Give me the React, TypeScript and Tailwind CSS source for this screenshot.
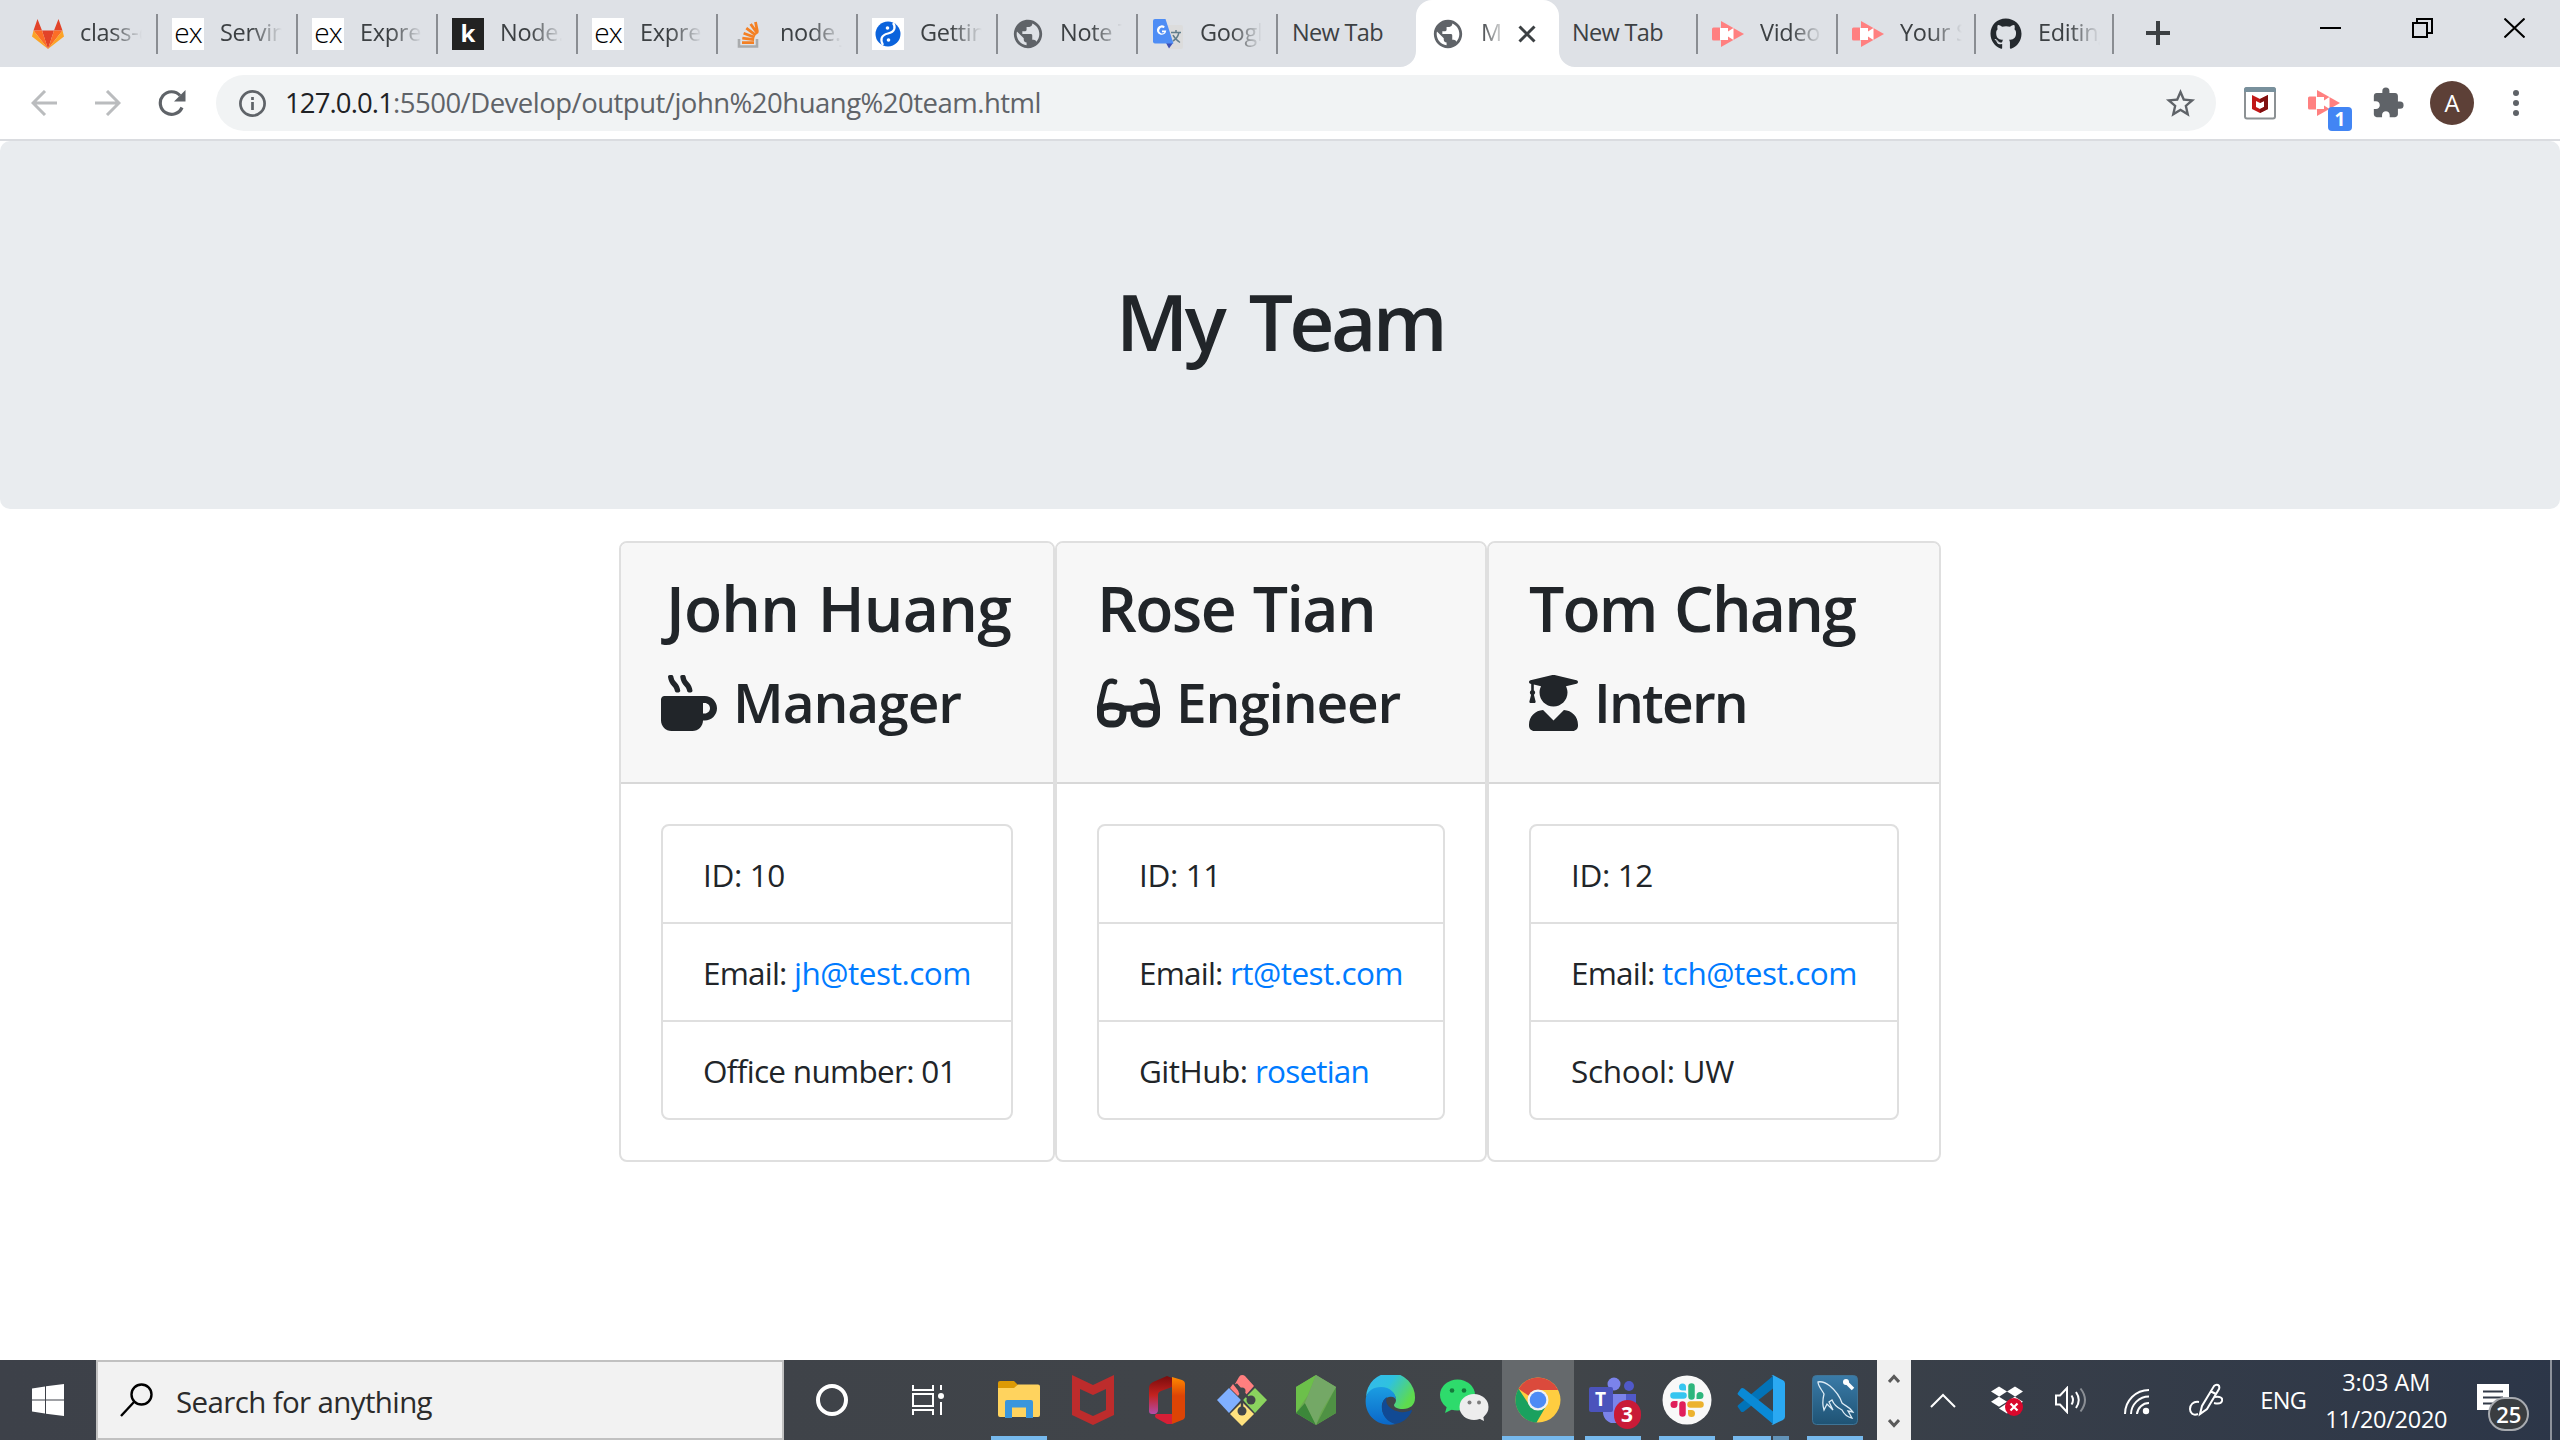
import { useLayoutEffect, useRef, useState, type ReactNode } from "react";
import { FaGithub, FaGlasses, FaMugHot, FaUserGraduate, FaDropbox } from "react-icons/fa";
import { MdExtension, MdPublic, MdStarBorder } from "react-icons/md";

/** One run of text whose tracking is computed so that it is exactly `w` pixels wide. */
function Fit({ w, children, className = "" }: { w: number; children: string; className?: string }) {
  const ref = useRef<HTMLSpanElement>(null);
  const [ls, setLs] = useState(0);
  useLayoutEffect(() => {
    const el = ref.current;
    if (!el) return;
    el.style.letterSpacing = "0px";
    const natural = el.getBoundingClientRect().width;
    const value = (w - natural) / children.length;
    el.style.letterSpacing = value + "px";
    setLs(value);
  }, [w, children]);
  return (
    <span ref={ref} className={"inline-block whitespace-pre " + className} style={{ letterSpacing: ls }}>
      {children}
    </span>
  );
}

/* ---------- favicons ---------- */

const GitLab = () => (
  <svg width="32" height="30" viewBox="0 0 32 30">
    <path d="M5.5 0 10 11.5H1.5zM26.500 0 22 11.500h8.500z" fill="#e24329" />
    <path d="M10 11.500h12L16 30z" fill="#e24329" />
    <path d="M1.500 11.500H10L16 30zM30.500 11.500H22L16 30z" fill="#fc6d26" />
    <path d="M1.500 11.500 0 17.500 16 30zM30.500 11.500 32 17.500 16 30z" fill="#fca326" />
  </svg>
);

const Ex = () => (
  <span className="flex h-8 w-8 items-center justify-center bg-white pb-[3px] font-['Open_Sans'] text-[28px] leading-none font-light tracking-[-1px] text-black">
    ex
  </span>
);

const KBox = () => (
  <span className="flex h-8 w-8 items-center justify-center bg-[#222] pb-[2px] font-['Open_Sans'] text-[24px] leading-none font-bold text-white">
    k
  </span>
);

const StackOverflow = () => (
  <svg width="32" height="32" viewBox="0 0 32 32">
    <path d="M7 21v7.500h18V21" fill="none" stroke="#a9abad" strokeWidth="2.600" />
    <path
      d="M10 24.600h12M10.300 20.200l11.800 1.500M11.600 15.200l11 4M14.300 10.200l9.400 7M18.600 6l7 9.600M23.500 4l2 10"
      stroke="#f48024"
      strokeWidth="2.800"
      fill="none"
    />
  </svg>
);

const Swirl = () => (
  <svg width="32" height="32" viewBox="0 0 32 32">
    <rect width="32" height="32" fill="#fff" />
    <circle cx="16" cy="16" r="12.500" fill="#0b63dc" />
    <path d="M21 5c3 4 2 9-5 10.500S8 22 11 27" fill="none" stroke="#fff" strokeWidth="2.200" />
    <circle cx="15.500" cy="10" r="1.800" fill="#fff" />
    <circle cx="16.500" cy="22" r="1.800" fill="#fff" />
  </svg>
);

const Globe = () => <MdPublic className="-m-px h-[34px] w-[34px] shrink-0 text-[#5f6368]" />;

const Translate = () => (
  <svg width="32" height="32" viewBox="0 0 32 32">
    <path d="M12 7h17a2 2 0 0 1 2 2v20a2 2 0 0 1-2 2H18z" fill="#dcdcdc" />
    <path d="M14 25h7l-4 5.500z" fill="#3f51b5" />
    <path d="M3 1h10.500l8 24.500H3a2 2 0 0 1-2-2V3a2 2 0 0 1 2-2z" fill="#4e8df5" />
    <path d="M14.300 12.500H10v1.800h2.500A2.900 2.900 0 1 1 11.600 10l1.300-1.300a4.700 4.700 0 1 0 1.400 3.800z" fill="#fff" />
    <path d="M19 14.500h10M24 12v2.500M27 14.500c-1 4-3.500 7-6 8.500M21 17c1.500 3.500 4 5.500 7 7.500" stroke="#607d8b" strokeWidth="1.500" fill="none" />
  </svg>
);

const Cast = () => (
  <svg width="32" height="26" viewBox="0 0 32 26">
    <path d="M9 0 32 13 9 26z" fill="#ff8080" />
    <rect x="0" y="6.500" width="9" height="13" rx="1.500" fill="#ff8080" />
    <path d="M8 7h8v3.500L21.500 7v12L16 15.500V19H8z" fill="#fff" />
  </svg>
);

/* ---------- tab strip ---------- */

type TabInfo = { label: string; icon?: ReactNode; width?: string; last?: boolean };

const leftTabs: TabInfo[] = [
  { label: "class-co", icon: <GitLab /> },
  { label: "Serving", icon: <Ex /> },
  { label: "Express", icon: <Ex /> },
  { label: "Node.js", icon: <KBox /> },
  { label: "Express", icon: <Ex /> },
  { label: "node.js", icon: <StackOverflow /> },
  { label: "Getting", icon: <Swirl /> },
  { label: "Note Ta", icon: <Globe /> },
  { label: "Google", icon: <Translate /> },
  { label: "New Tab", last: true },
];

const rightTabs: TabInfo[] = [
  { label: "New Tab" },
  { label: "Video |", icon: <Cast /> },
  { label: "Your Sc", icon: <Cast />, width: "w-[138px]" },
  { label: "Editing", icon: <FaGithub className="h-8 w-8 text-[#24292e]" />, width: "w-[138px]" },
];

function Tab({ label, icon, width = "w-[140px]", last }: TabInfo) {
  return (
    <div className={"flex h-[67px] shrink-0 items-center pl-[14px] " + width}>
      {icon ? (
        <>
          <span className="mr-4 flex h-8 w-8 shrink-0 items-center">{icon}</span>
          <span className="w-[62px] overflow-hidden pb-[1px] text-[23.500px] tracking-[-0.300px] whitespace-nowrap [mask-image:linear-gradient(to_right,#000_50%,transparent)]">
            {label}
          </span>
        </>
      ) : (
        <span className="w-[110px] pb-[1px] text-[23.500px]">
          <Fit w={91}>{label}</Fit>
        </span>
      )}
      {!last && <span className="ml-auto h-10 w-[2px] shrink-0 bg-[#8a8d92]" />}
    </div>
  );
}

function TabStrip() {
  return (
    <div className="flex h-[67px] bg-[#dee1e6] pl-[18px] text-[#3c4043]">
      {leftTabs.map((t, i) => (
        <Tab key={i} {...t} />
      ))}
      <div className="relative -mr-[1px] -ml-[2px] flex h-[67px] w-[143px] shrink-0 items-center rounded-t-2xl bg-white pl-4">
        <svg className="absolute bottom-0 -left-4" width="16" height="16">
          <path d="M16 0v16H0A16 16 0 0 0 16 0z" fill="#fff" />
        </svg>
        <svg className="absolute -right-4 bottom-0" width="16" height="16">
          <path d="M0 0v16h16A16 16 0 0 1 0 0z" fill="#fff" />
        </svg>
        <Globe />
        <span className="ml-[17px] w-[21px] overflow-hidden pb-[1px] text-[23.500px] whitespace-nowrap [mask-image:linear-gradient(to_right,#000,transparent_120%)]">
          My Team
        </span>
        <svg className="ml-4" width="18" height="18" viewBox="0 0 18 18">
          <path d="M1.500 1.500l15 15M16.500 1.500l-15 15" stroke="#3c4043" strokeWidth="3" />
        </svg>
      </div>
      {rightTabs.map((t, i) => (
        <Tab key={i} {...t} />
      ))}
      <svg className="mt-[21px] ml-8" width="24" height="24" viewBox="0 0 24 24">
        <path d="M12 0v24M0 12h24" stroke="#3c4043" strokeWidth="4" />
      </svg>
      <div className="mt-[18px] ml-auto flex h-5 gap-[71px] pr-[35px]">
        <svg width="21" height="20">
          <path d="M0 10h21" stroke="#000" strokeWidth="2" />
        </svg>
        <svg width="21" height="20" fill="none" stroke="#000" strokeWidth="2">
          <path d="M1 5h14v14H1zM5 5V1h15v14h-5" />
        </svg>
        <svg width="21" height="20" stroke="#000" strokeWidth="2">
          <path d="M.5.5l20 19M20.500.5l-20 19" />
        </svg>
      </div>
    </div>
  );
}

function Toolbar() {
  return (
    <div className="flex h-[74px] items-center border-b-2 border-[#dadce0] bg-white pl-[31px]">
      <svg width="26" height="26" viewBox="0 0 26 26" fill="none" stroke="#babcbe" strokeWidth="3">
        <path d="M26 13H2M14 1 2 13l12 12" />
      </svg>
      <svg className="ml-[38px]" width="26" height="26" viewBox="0 0 26 26" fill="none" stroke="#babcbe" strokeWidth="3">
        <path d="M0 13h24M12 1l12 12-12 12" />
      </svg>
      <svg className="ml-[37px]" width="28" height="28" viewBox="0 0 28 28">
        <path d="M24 18.500A11.300 11.300 0 1 1 22 6.500" fill="none" stroke="#5f6368" strokeWidth="3.200" />
        <path d="M27.500 1v11.500H16z" fill="#5f6368" />
      </svg>
      <div className="ml-[30px] flex h-14 w-[2000px] items-center rounded-full bg-[#f1f3f4] pl-[23px]">
        <svg width="27" height="27" viewBox="0 0 27 27">
          <circle cx="13.500" cy="13.500" r="12.100" fill="none" stroke="#5f6368" strokeWidth="2.700" />
          <path d="M13.500 12v8M13.500 7v3" stroke="#5f6368" strokeWidth="2.700" />
        </svg>
        <span className="ml-[19px] text-[27.500px] leading-10 text-[#5f6368]">
          <Fit w={108} className="text-[#202124]">127.0.0.1</Fit>
          <Fit w={648}>:5500/Develop/output/john%20huang%20team.html</Fit>
        </span>
        <MdStarBorder className="mr-[18px] ml-auto h-[35px] w-[35px] text-[#5f6368]" />
      </div>
      <svg className="ml-7" width="32" height="33" viewBox="0 0 32 33">
        <rect x="1" y="1" width="30" height="30.500" rx="2" fill="#fff" stroke="#8c9194" strokeWidth="2" />
        <path d="M0 3a3 3 0 0 1 3-3h26a3 3 0 0 1 3 3v2H0z" fill="#78909c" />
        <path d="M8 8l8 4 8-4v14l-8 4-8-4zM12 14v6l4 2 4-2v-6l-4 2z" fill="#c01818" fillRule="evenodd" />
        <path d="M24 8v14l-8 4v-4l4-2v-6l-4 2v-4z" fill="#7f1010" />
      </svg>
      <div className="relative ml-8">
        <Cast />
        <span className="absolute top-[17px] left-5 flex h-6 w-6 items-center justify-center rounded bg-[#4285f4] font-['Open_Sans'] text-[19px] leading-none font-bold text-white">
          1
        </span>
      </div>
      <MdExtension className="ml-[31px] h-[34px] w-[34px] text-[#5f6368]" />
      <span className="ml-[25px] flex h-11 w-11 items-center justify-center rounded-full bg-[#5d4037] text-[24px] text-white">A</span>
      <svg className="ml-[39px]" width="6" height="26" fill="#5f6368">
        <circle cx="3" cy="3" r="3" />
        <circle cx="3" cy="13" r="3" />
        <circle cx="3" cy="23" r="3" />
      </svg>
    </div>
  );
}

/* ---------- team page ---------- */

type Row = { label: string; w: number; link?: string; lw?: number };
type Member = {
  name: string;
  nw: number;
  shift?: string;
  role: string;
  rw: number;
  icon: ReactNode;
  width: string;
  rows: Row[];
};

const team: Member[] = [
  {
    name: "John Huang",
    nw: 345,
    shift: "ml-[5px]",
    role: "Manager",
    rw: 228,
    icon: <FaMugHot className="h-14 w-14" />,
    width: "w-[436px]",
    rows: [
      { label: "ID: 10", w: 82 },
      { label: "Email: ", w: 91, link: "jh@test.com", lw: 177 },
      { label: "Office number: 01", w: 253 },
    ],
  },
  {
    name: "Rose Tian",
    nw: 278,
    role: "Engineer",
    rw: 224,
    icon: <FaGlasses className="h-14 w-[63px]" />,
    width: "w-[432px]",
    rows: [
      { label: "ID: 11", w: 82 },
      { label: "Email: ", w: 91, link: "rt@test.com", lw: 173 },
      { label: "GitHub: ", w: 116, link: "rosetian", lw: 114 },
    ],
  },
  {
    name: "Tom Chang",
    nw: 326,
    role: "Intern",
    rw: 153,
    icon: <FaUserGraduate className="h-14 w-[49px]" />,
    width: "w-[454px]",
    rows: [
      { label: "ID: 12", w: 82 },
      { label: "Email: ", w: 91, link: "tch@test.com", lw: 195 },
      { label: "School: UW", w: 163 },
    ],
  },
];

function Card({ m }: { m: Member }) {
  return (
    <div className={"h-[621px] overflow-hidden rounded-lg border-2 border-[#dfdfdf] bg-white " + m.width}>
      <div className="flex h-[241px] flex-col border-b-2 border-[#d8d8d8] bg-[#f7f7f7] px-10 pt-[26px] font-semibold">
        <h2 className="flex h-[77px] items-center text-[62.500px] [word-spacing:3px]">
          <span className={m.shift}>
            <Fit w={m.nw}>{m.name}</Fit>
          </span>
        </h2>
        <h3 className="mt-[23px] flex h-[67px] items-center text-[55px]">
          {m.icon}
          <span className="ml-4">
            <Fit w={m.rw}>{m.role}</Fit>
          </span>
        </h3>
      </div>
      <ul className="m-10 mb-0 h-[296px] divide-y-2 divide-[#dfdfdf] rounded-lg border-2 border-[#dfdfdf] text-[31.500px]">
        {m.rows.map((r) => (
          <li key={r.label} className="flex h-[98px] items-center pt-[2px] pl-10 last:h-[96px]">
            <Fit w={r.w}>{r.label}</Fit>
            {r.link && (
              <a className="text-[#007bff]">
                <Fit w={r.lw ?? 0}>{r.link}</Fit>
              </a>
            )}
          </li>
        ))}
      </ul>
    </div>
  );
}

/* ---------- taskbar icons ---------- */

const Explorer = () => (
  <svg width="42" height="38" viewBox="0 0 42 38">
    <path d="M0 2a2 2 0 0 1 2-2h14l4 4-4 4H0z" fill="#dd9a04" />
    <path d="M0 7h16l4-3.500h20a2 2 0 0 1 2 2V34a2 2 0 0 1-2 2H2a2 2 0 0 1-2-2z" fill="#ffd35e" />
    <path d="M7 21a2 2 0 0 1 2-2h24a2 2 0 0 1 2 2v16h-7V26.500H14V37H7z" fill="#3a96dd" />
  </svg>
);

const McAfee = () => (
  <svg width="42" height="50" viewBox="0 0 42 50">
    <path d="M0 0l21 10L42 0v40L21 50 0 40zM8 14v21l13 6 13-6V14l-13 6z" fill="#bd2c2c" fillRule="evenodd" />
  </svg>
);

const Office = () => (
  <svg width="36" height="48" viewBox="0 0 36 48">
    <defs>
      <linearGradient id="offL" x1="0" y1="0" x2="0" y2="1">
        <stop offset="0" stopColor="#790c0c" />
        <stop offset=".5" stopColor="#c3221f" />
        <stop offset="1" stopColor="#b44ca8" />
      </linearGradient>
      <linearGradient id="offR" x1="0" y1="0" x2="0" y2="1">
        <stop offset="0" stopColor="#ff8a00" />
        <stop offset=".4" stopColor="#dd4405" />
      </linearGradient>
    </defs>
    <path d="M0 12Q0 8 4 6L18 0l5 2v9l-11 4q-3 1-3 4v15q0 3-3 4H3q-3 0-3-3z" fill="url(#offL)" />
    <path d="M7 38h16v10h-5L7 42q-2-2 0-4z" fill="#d61f36" />
    <path d="M23 1l10 3q3 1 3 4v32q0 3-3 4l-10 4z" fill="url(#offR)" />
  </svg>
);

const Git = () => (
  <svg width="50" height="52" viewBox="0 0 50 52">
    <g>
      <path d="M25 1q2 0 3 1l9 10-8 9q-5-4-9-10l-2-1 4-7q1-2 3-2zM16 10l7 9-2 3-8-8z" fill="#ff7f7f" />
      <path d="M12 14l12 12-12 13L0 26z" fill="#80b0ff" />
      <path d="M38 14l12 12-12 13-12-13z" fill="#8ad35e" />
      <path d="M25 28l12 12-12 12-12-12z" fill="#ffe27f" />
      <path d="M19 10l6 7v22M25 17l8 9" stroke="#414549" strokeWidth="2.500" fill="none" />
      <circle cx="25" cy="17" r="3.500" fill="#414549" />
      <circle cx="34" cy="26" r="4.500" fill="#414549" />
      <circle cx="25" cy="37" r="4.500" fill="#414549" />
    </g>
  </svg>
);

const NodeHex = () => (
  <svg width="42" height="50" viewBox="0 0 42 50">
    <path d="M21 0l20 12v26L21 50 1 38V12z" fill="#6aa84f" />
    <path d="M1 12L21 0l-8 20zM1 12l12 8L1 38z" fill="#6cc04a" />
    <path d="M1 38l9-10 11 22z" fill="#3c873a" />
    <path d="M41 12L21 50l20-12z" fill="#4f9144" />
    <path d="M21 0l20 12-15 25-5 13-11-22z" fill="#74a866" />
  </svg>
);

const Edge = () => (
  <svg width="50" height="50" viewBox="0 0 50 50">
    <defs>
      <linearGradient id="edgeT" x1="0" y1="0" x2="1" y2=".5">
        <stop offset="0" stopColor="#35b8ef" />
        <stop offset=".5" stopColor="#2fc2df" />
        <stop offset="1" stopColor="#5edb4e" />
      </linearGradient>
      <linearGradient id="edgeB" x1="0" y1="0" x2="0" y2="1">
        <stop offset="0" stopColor="#1b9de2" />
        <stop offset="1" stopColor="#0b67c8" />
      </linearGradient>
    </defs>
    <path d="M1 22A24.500 24.500 0 0 1 50 23c0 7-5 11-12 11-6 0-9-2-9-4 0-1 2-2 2-5 0-7-7-12-15-12S3 17 1 22z" fill="url(#edgeT)" />
    <path d="M1 22c2-6 7-10 15-10 9 0 15 6 15 13-1-3-4-4-7-3-5 1-8 6-7 12 1 8 8 13 14 15C14 53-2 41 1 22z" fill="url(#edgeB)" />
    <path d="M17 33c0-6 2-9 5-11-2 4 0 9 5 12 6 4 14 4 19 1 1 0 1 1 1 1-4 8-10 12-17 13-7-2-13-8-13-16z" fill="#114a94" />
  </svg>
);

const WeChat = () => (
  <svg width="49" height="42" viewBox="0 0 49 42">
    <ellipse cx="17.500" cy="16" rx="17.500" ry="15.500" fill="#2edb6c" />
    <path d="M7 27l-2 7 8-4z" fill="#2edb6c" />
    <ellipse cx="34" cy="28" rx="14.500" ry="13" fill="#ededed" />
    <path d="M38 39l6 3-1-6z" fill="#ededed" />
    <circle cx="12" cy="11.500" r="2.300" fill="#157a3b" />
    <circle cx="24" cy="11.500" r="2.300" fill="#157a3b" />
    <circle cx="29.500" cy="23.500" r="2" fill="#7d7d7d" />
    <circle cx="39" cy="23.500" r="2" fill="#7d7d7d" />
  </svg>
);

const Chrome = () => (
  <svg width="46" height="46" viewBox="0 0 46 46">
    <circle cx="23" cy="23" r="22.500" fill="#ffcd40" />
    <path d="M3.500 11.700A22.500 22.500 0 0 1 43.200 13H23a10 10 0 0 0-9 6z" fill="#db4a3c" />
    <path d="M3.500 11.700A22.500 22.500 0 0 0 21.500 45.500L31.700 28 23 33l-8.700-5z" fill="#1aa15f" />
    <circle cx="23" cy="23" r="10.500" fill="#f1f1f1" />
    <circle cx="23" cy="23" r="8.300" fill="#4c8bf5" />
  </svg>
);

const Teams = () => (
  <div className="relative h-[46px] w-12">
    <svg width="48" height="46" viewBox="0 0 48 46">
      <circle cx="25" cy="7" r="6.500" fill="#7b83eb" />
      <circle cx="40" cy="9" r="5" fill="#5059c9" />
      <path d="M34 17h13v14a9 9 0 0 1-13 6z" fill="#5059c9" />
      <path d="M13 17h24v17a11.500 11.500 0 0 1-23 2z" fill="#7b83eb" />
      <rect x="0" y="10" width="24" height="25" rx="2" fill="#4b53bc" />
    </svg>
    <span className="absolute top-[10px] left-0 flex h-[25px] w-6 items-center justify-center text-[19px] leading-none font-bold text-white">
      T
    </span>
    <span className="absolute top-[23px] left-[25px] flex h-[29px] w-[27px] items-center justify-center rounded-full bg-[#c91a37] text-[21px] leading-none font-bold text-white">
      3
    </span>
  </div>
);

const Slack = () => (
  <svg width="50" height="50" viewBox="0 0 50 50">
    <circle cx="25" cy="25" r="24.500" fill="#f8f8f8" />
    <g strokeWidth="6.500" strokeLinecap="round">
      <path d="M11.500 20.500h10" stroke="#36c5f0" />
      <path d="M29.500 11.500v10" stroke="#2eb67d" />
      <path d="M28.500 29.500h10" stroke="#ecb22e" />
      <path d="M20.500 29.500v9" stroke="#e01e5a" />
    </g>
    <path d="M20.500 8.500a3.500 3.500 0 0 0 0 7H24V12a3.500 3.500 0 0 0-3.500-3.500z" fill="#36c5f0" />
    <path d="M41.500 20.500a3.500 3.500 0 0 0-7 0V24H38a3.500 3.500 0 0 0 3.500-3.500z" fill="#2eb67d" />
    <path d="M29.500 42a3.500 3.500 0 0 0 0-7H26v3.500a3.500 3.500 0 0 0 3.500 3.500z" fill="#ecb22e" />
    <path d="M8.500 29.500a3.500 3.500 0 0 0 7 0V26H12a3.500 3.500 0 0 0-3.500 3.500z" fill="#e01e5a" />
  </svg>
);

const VSCode = () => (
  <svg width="48" height="50" viewBox="0 0 48 48" preserveAspectRatio="none">
    <path d="M1 31l3 4q1 1 3 0L36 13V1L1 29q-1 1 0 2z" fill="#0273b8" />
    <path d="M1 17l3-4q1-1 3 0l29 22v12L1 19q-1-1 0-2z" fill="#0a8ad6" />
    <path d="M34 .5q1-.8 2-.4l10 5q2 1 2 3v32q0 2-2 3l-10 4.700q-1 .5-2-.5 2 1 2-1.500V2q0-2.500-2-1.500z" fill="#2aa9f3" />
  </svg>
);

const MySQL = () => (
  <svg width="46" height="50" viewBox="0 0 46 50">
    <defs>
      <linearGradient id="sql" x1="0" y1="0" x2="0" y2="1">
        <stop offset="0" stopColor="#3a7ba8" />
        <stop offset="1" stopColor="#1f5374" />
      </linearGradient>
    </defs>
    <rect x=".5" y=".5" width="45" height="49" rx="4" fill="url(#sql)" stroke="#3f7496" />
    <path
      d="M6 7c4-1 8 1 12 4 6 5 10 11 12 17 3 3 8 4 11 9l-5-1 4 7c-5-1-8-4-10-8-4-2-8-5-10-10l-3 2 4 8-6-6-3 6c-2-6-1-12 0-16-2-4-6-8-6-12z"
      fill="none"
      stroke="#dcebf5"
      strokeWidth="1.300"
    />
    <path d="M33 6l8 8" stroke="#fff" strokeWidth="3.500" />
    <circle cx="34" cy="7" r="3" fill="#fff" />
  </svg>
);

const apps: { icon: ReactNode; line?: "full" | "wide" | "split" }[] = [
  { icon: <Explorer />, line: "full" },
  { icon: <McAfee /> },
  { icon: <Office /> },
  { icon: <Git /> },
  { icon: <NodeHex /> },
  { icon: <Edge /> },
  { icon: <WeChat /> },
  { icon: <Chrome />, line: "wide" },
  { icon: <Teams />, line: "full" },
  { icon: <Slack />, line: "full" },
  { icon: <VSCode />, line: "split" },
  { icon: <MySQL />, line: "full" },
];

function Taskbar() {
  return (
    <div className="flex h-20 shrink-0 bg-linear-to-r from-[#3d4149] via-[#414549] via-60% to-[#2c3648] text-white">
      <div className="flex w-24 items-center justify-center">
        <svg width="32" height="32" viewBox="0 0 32 32" fill="#fff">
          <path d="M0 4.500l13-2v13H0zM14 2.300 32 0v15.500H14zM0 16.500h13v13l-13-2zM14 16.500h18V32l-18-2.300z" />
        </svg>
      </div>
      <div className="flex w-[688px] items-center border-2 border-[#c1c1c1] bg-[#f2f2f2] pl-[22px] text-[#2b2b2b]">
        <svg width="34" height="34" viewBox="0 0 34 34" fill="none" stroke="#000" strokeWidth="2.400">
          <circle cx="21.500" cy="11.500" r="10" />
          <path d="M14 19 1 33" />
        </svg>
        <span className="ml-[22px] pt-[5px] text-[29.500px]">
          <Fit w={256}>Search for anything</Fit>
        </span>
      </div>
      <div className="flex w-24 items-center justify-center">
        <svg width="34" height="34">
          <circle cx="17" cy="17" r="14" fill="none" stroke="#fff" strokeWidth="4" />
        </svg>
      </div>
      <div className="flex w-24 items-center justify-center">
        <svg width="32" height="32" viewBox="0 0 32 32" fill="none" stroke="#fff" strokeWidth="2">
          <path d="M1 1v5h20V1M1 10h20v12H1zM1 31v-5h20v5M29 1v5M29 18v13" />
          <circle cx="29" cy="12" r="3" fill="#fff" stroke="none" />
        </svg>
      </div>
      <div className="ml-[6px] flex">
        {apps.map((a, i) => (
          <div
            key={i}
            className={"mx-[1.100px] flex w-[72px] flex-col items-center " + (a.line === "wide" ? "bg-[#65696c]" : "")}
          >
            <div className="flex h-[76px] items-center pt-1">{a.icon}</div>
            {a.line === "full" && <div className="h-1 w-14 bg-[#76b9ed]" />}
            {a.line === "wide" && <div className="h-1 w-full bg-[#76b9ed]" />}
            {a.line === "split" && (
              <div className="flex h-1 w-14 gap-[2px]">
                <div className="w-[38px] bg-[#76b9ed]" />
                <div className="w-4 bg-[#6293b8]" />
              </div>
            )}
          </div>
        ))}
      </div>
      <div className="ml-[5px] flex w-[34px] flex-col items-center justify-between bg-[#f0f0f0] pt-[14px] pb-3">
        <svg width="12" height="9" fill="none" stroke="#5a5a5a" strokeWidth="3">
          <path d="M1 8l5-5.500L11 8" />
        </svg>
        <svg width="12" height="9" fill="none" stroke="#5a5a5a" strokeWidth="3">
          <path d="M1 1l5 5.500L11 1" />
        </svg>
      </div>
      <div className="flex w-16 items-center justify-center">
        <svg width="26" height="15" fill="none" stroke="#fff" strokeWidth="2">
          <path d="M1 14 13 2l12 12" />
        </svg>
      </div>
      <div className="flex w-16 items-center justify-center">
        <div className="relative">
          <FaDropbox className="h-8 w-8" />
          <svg className="absolute top-[14px] left-[14px]" width="18" height="18">
            <circle cx="9" cy="9" r="9" fill="#d9082c" />
            <path d="M5.500 5.500l7 7M12.500 5.500l-7 7" stroke="#fff" strokeWidth="2.200" />
          </svg>
        </div>
      </div>
      <div className="flex w-16 items-center justify-center">
        <svg width="32" height="28" viewBox="0 0 32 28" fill="none" stroke="#fff" strokeWidth="2">
          <path d="M1 9.500h4L12 2v24l-7-7.500H1z" />
          <path d="M16.500 9.500q3 4.500 0 9M21 6q5.500 8 0 16" />
          <path d="M25.500 2.500q9 11.500 0 23" stroke="#8b8f95" />
        </svg>
      </div>
      <div className="flex w-[68px] items-center justify-center pt-1">
        <svg width="26" height="26" viewBox="0 0 26 26" fill="none" stroke="#fff" strokeWidth="2">
          <path d="M1 25A24 24 0 0 1 25 1M7 25A18 18 0 0 1 25 7.500M13 25a12 12 0 0 1 12-11" />
          <circle cx="22" cy="22" r="3.200" fill="#fff" stroke="none" />
        </svg>
      </div>
      <div className="flex w-[70px] items-center justify-center">
        <svg width="34" height="34" viewBox="0 0 34 34" fill="none" stroke="#fff" strokeWidth="2">
          <path d="M11 31l2-8L25 3q2-2 4-1t1 4L18 26zM21 8l6 3" />
          <path d="M10 19c-6-1-9 3-9 7s3 7 8 5M26 14c5-1 8 1 7 4s-4 3-8 2" />
        </svg>
      </div>
      <div className="flex w-[84px] items-center justify-center pt-[2px] text-[23.500px]">
        <Fit w={46}>ENG</Fit>
      </div>
      <div className="flex w-[122px] flex-col items-center pt-[4px] text-[23.500px] leading-[37px]">
        <Fit w={88}>3:03 AM</Fit>
        <Fit w={122}>11/20/2020</Fit>
      </div>
      <div className="relative mt-6 ml-[30px] h-12 w-[52px]">
        <svg width="34" height="34" viewBox="0 0 34 34">
          <path d="M0 0h32v26H20l-8 7v-7H0z" fill="#fff" />
          <path d="M6 7.500h20M6 13.500h20M6 19.500h12" stroke="#323a48" strokeWidth="2" />
        </svg>
        <span className="absolute top-[13px] left-[11px] flex h-[34px] w-[41px] items-center justify-center rounded-full border-2 border-[#a8abb0] bg-[#3a3d40] text-[22px] leading-none font-semibold">
          25
        </span>
      </div>
      <div className="ml-[21px] w-[2px] bg-[#8d939c]" />
    </div>
  );
}

export default function App() {
  return (
    <div className="flex h-[1440px] w-[2560px] flex-col overflow-hidden bg-white font-['Open_Sans','Noto_Sans',sans-serif] text-[#212529]">
      <TabStrip />
      <Toolbar />
      <main className="flex grow flex-col">
        <div className="flex h-[368px] items-center justify-center rounded-[10px] bg-[#e9ecef] pb-[9px]">
          <h1 className="text-[78.500px] leading-[96px] font-semibold [word-spacing:9px]">
            <Fit w={328}>My Team</Fit>
          </h1>
        </div>
        <div className="mt-8 flex justify-center">
          {team.map((m) => (
            <Card key={m.name} m={m} />
          ))}
        </div>
      </main>
      <Taskbar />
    </div>
  );
}
